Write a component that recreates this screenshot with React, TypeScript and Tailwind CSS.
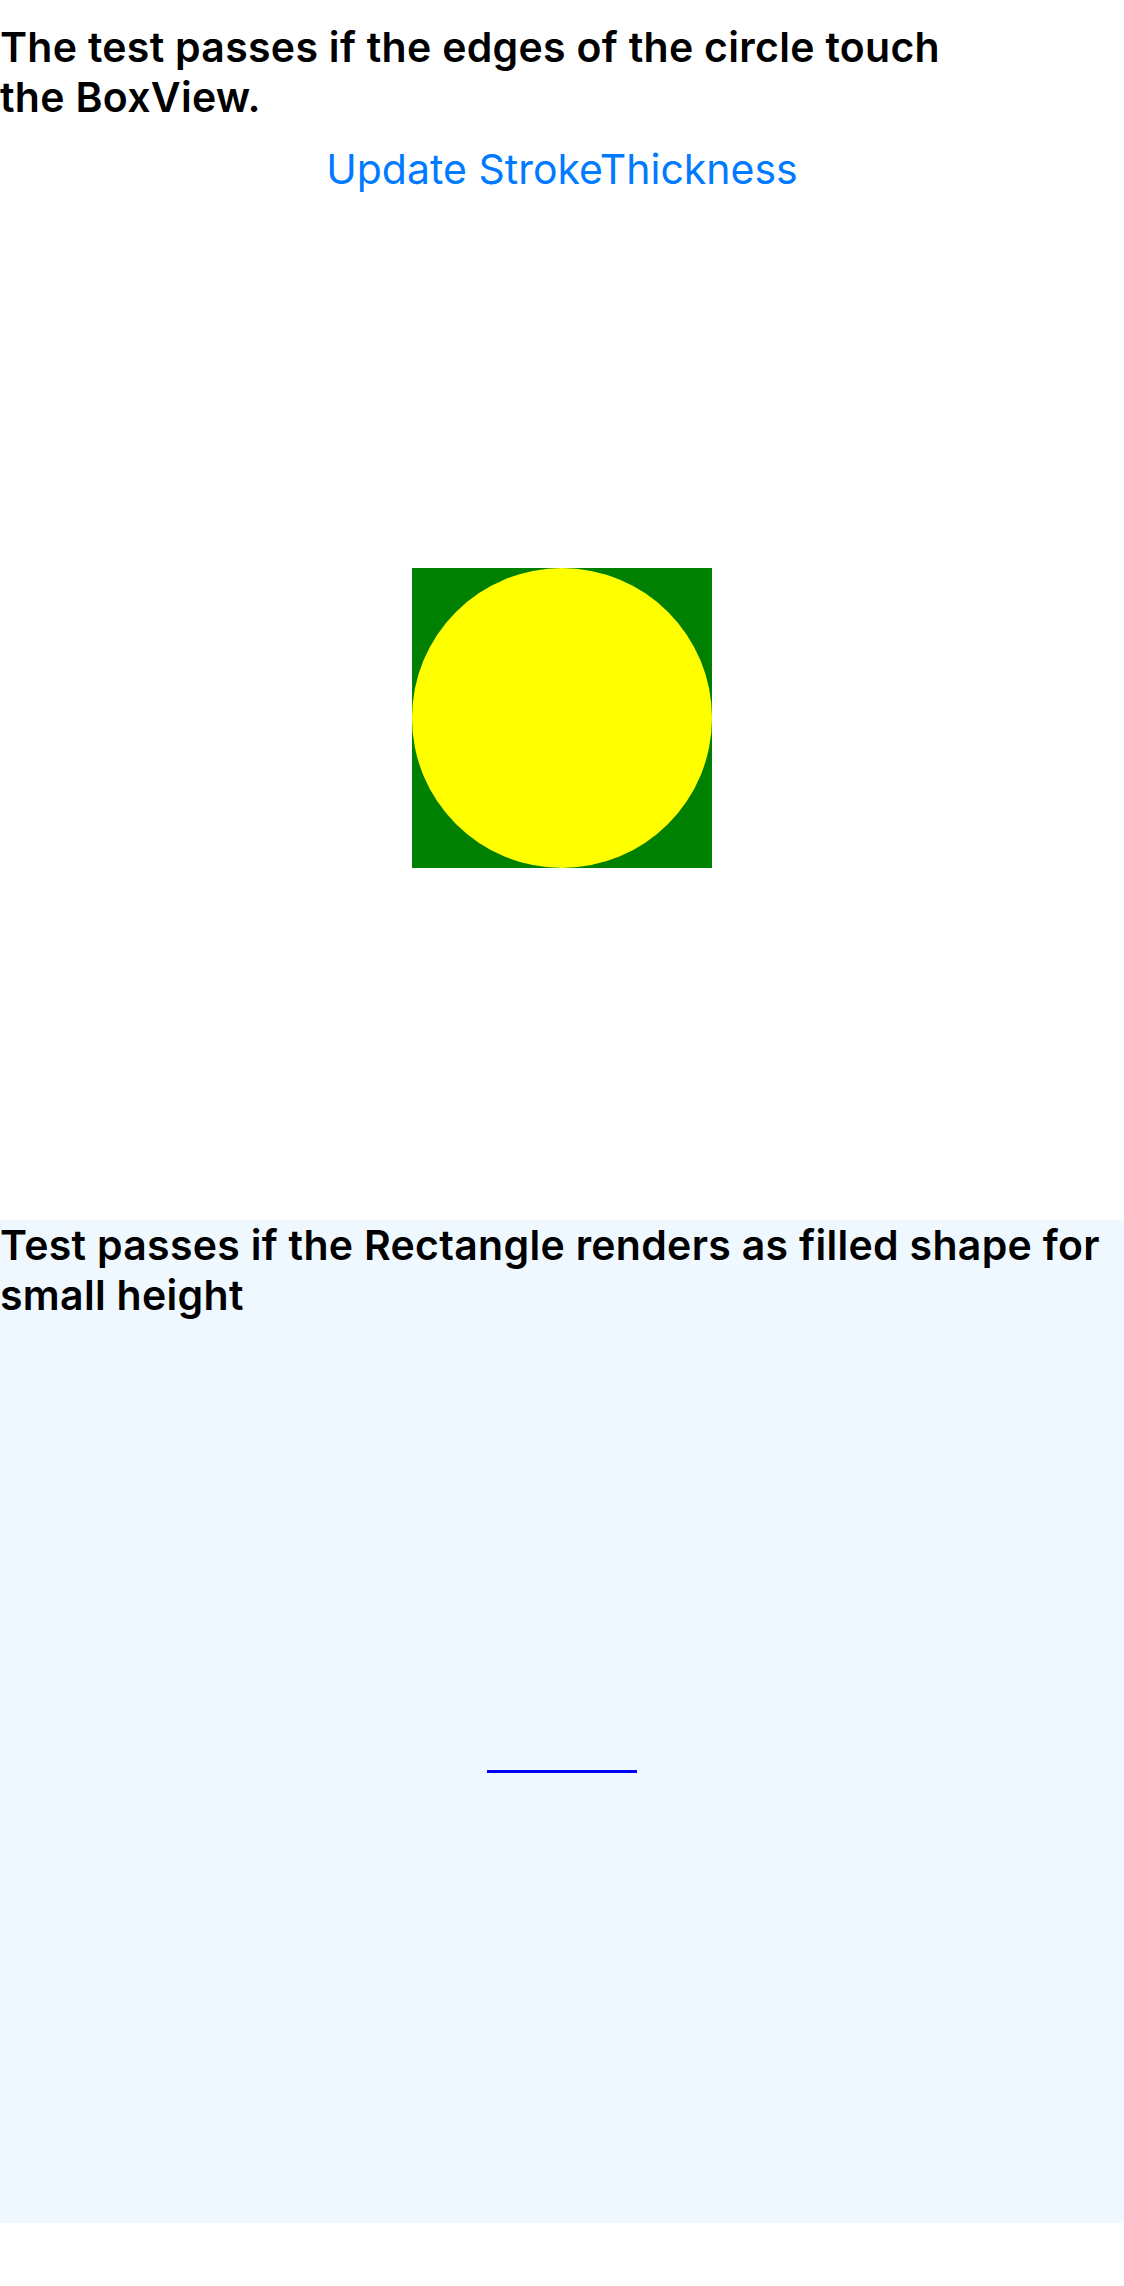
export default function App() {
    return (
        <div className="w-[1124px] h-[2286px] bg-white font-['Inter','Liberation_Sans',sans-serif]">
            {/* Circle vs BoxView test */}
            <section className="h-[1220px] flex flex-col pt-[22px]">
                <p className="text-[41px] leading-[50px] font-semibold text-black tracking-[0.3px]">
                    The test passes if the edges of the circle touch
                    <br />
                    the BoxView.
                </p>
                <div className="h-[94px] flex items-center justify-center">
                    <button className="text-[41px] leading-[48px] text-[#007aff]">Update StrokeThickness</button>
                </div>
                <div className="flex-1 flex items-center justify-center">
                    <div className="w-[300px] h-[300px] bg-[#008000] flex">
                        <div className="w-full h-full rounded-full bg-[#ffff00]" />
                    </div>
                </div>
            </section>

            {/* Rectangle small height test */}
            <section className="h-[1003px] bg-[#f0f8ff] flex flex-col">
                <p className="text-[41px] leading-[50px] font-semibold text-black tracking-[0.3px]">
                    Test passes if the Rectangle renders as filled shape for small height
                </p>
                <div className="flex-1 flex items-center justify-center">
                    <div className="w-[150px] h-[3px] bg-[#0000ff]" />
                </div>
            </section>
        </div>
    );
}
